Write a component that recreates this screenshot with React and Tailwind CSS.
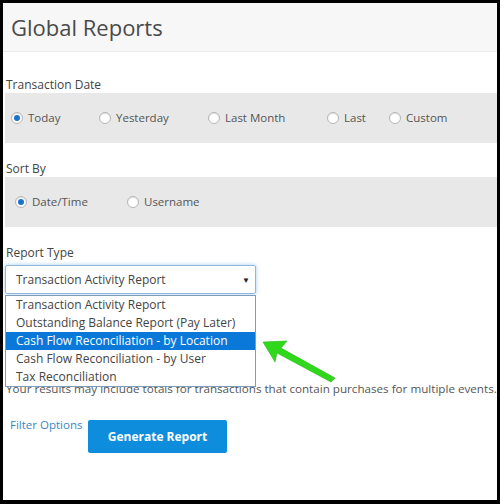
import React from 'react';

const Radio = ({ checked, label, width }) => (
  <label className="flex items-center shrink-0" style={{ width }}>
    <span className="w-[12px] h-[12px] rounded-full bg-white border border-[#b5b5b5] flex items-center justify-center shadow-[inset_0_1px_1px_rgba(0,0,0,0.12)]">
      {checked && <span className="w-[6px] h-[6px] rounded-full bg-[#1a73c9]" />}
    </span>
    <span className="ml-[5px] text-[11.5px] text-[#555]">{label}</span>
  </label>
);

const reportTypes = [
  'Transaction Activity Report',
  'Outstanding Balance Report (Pay Later)',
  'Cash Flow Reconciliation - by Location',
  'Cash Flow Reconciliation - by User',
  'Tax Reconciliation',
];

const App = () => {
  return (
    <div className="w-[500px] h-[504px] bg-black pt-[3px] pl-[3px] pr-[3px] pb-[4px] font-['Open_Sans',sans-serif]">
      <div className="relative w-full h-full bg-white overflow-hidden">
        {/* Header */}
        <div className="h-[49px] bg-[#f7f7f7] border-b border-[#ebebeb] flex items-center pl-[8px]">
          <h1 className="text-[22px] text-[#4a4a4a] leading-none">Global Reports</h1>
        </div>

        {/* Transaction Date */}
        <div className="mt-[25px] pl-[3px] text-[12px] leading-[16px] text-[#444]">Transaction Date</div>
        <div className="ml-[2px] h-[50px] bg-[#e8e8e8] flex items-center pl-[6px]">
          <Radio checked label="Today" width="88px" />
          <Radio label="Yesterday" width="109px" />
          <Radio label="Last Month" width="119px" />
          <Radio label="Last" width="62px" />
          <Radio label="Custom" width="80px" />
        </div>

        {/* Sort By */}
        <div className="mt-[18px] pl-[3px] text-[12px] leading-[16px] text-[#444]">Sort By</div>
        <div className="ml-[2px] h-[50px] bg-[#e8e8e8] flex items-center pl-[10px]">
          <Radio checked label="Date/Time" width="112px" />
          <Radio label="Username" width="100px" />
        </div>

        {/* Report Type */}
        <div className="mt-[18px] pl-[3px] text-[12px] leading-[16px] text-[#444]">Report Type</div>
        <div className="mt-[4px] ml-[2px] w-[251px] h-[29px] border border-[#8fb6dc] rounded-[2px] shadow-[0_0_4px_rgba(90,160,230,0.55)] flex items-center justify-between pl-[10px] pr-[5px]">
          <span className="text-[12px] text-[#444]">Transaction Activity Report</span>
          <span className="text-[8px] text-[#222]">▼</span>
        </div>

        <p className="mt-[87px] pl-[3px] text-[11.65px] leading-[15px] text-[#555] whitespace-nowrap">
          Your results may include totals for transactions that contain purchases for multiple events.
        </p>

        <div className="mt-[24px] flex items-start pl-[7px]">
          <a className="w-[78px] text-[11.5px] text-[#3a87c8] mt-[-4px]">Filter Options</a>
          <button className="w-[139px] h-[33px] bg-[#0d8ddb] rounded-[2px] text-white text-[12px] font-bold">
            Generate Report
          </button>
        </div>

        {/* Open dropdown list */}
        <ul className="absolute left-[2px] top-[292px] w-[251px] bg-white border border-[#7f9db9] py-0">
          {reportTypes.map((t, i) => (
            <li
              key={t}
              className={`h-[18px] leading-[18px] pl-[10px] text-[12px] ${
                i === 2 ? 'bg-[#0a78d8] text-white' : 'text-[#444]'
              }`}
            >
              {t}
            </li>
          ))}
        </ul>

        {/* Green arrow */}
        <svg className="absolute left-[255px] top-[335px]" width="85" height="50" viewBox="0 0 85 50">
          <polygon
            points="5,4 29,3 23,10 77,40 73,44 19,15 17,24"
            fill="#2fd81a"
            stroke="#25b514"
            strokeWidth="0.6"
          />
        </svg>
      </div>
    </div>
  );
};

export default App;
